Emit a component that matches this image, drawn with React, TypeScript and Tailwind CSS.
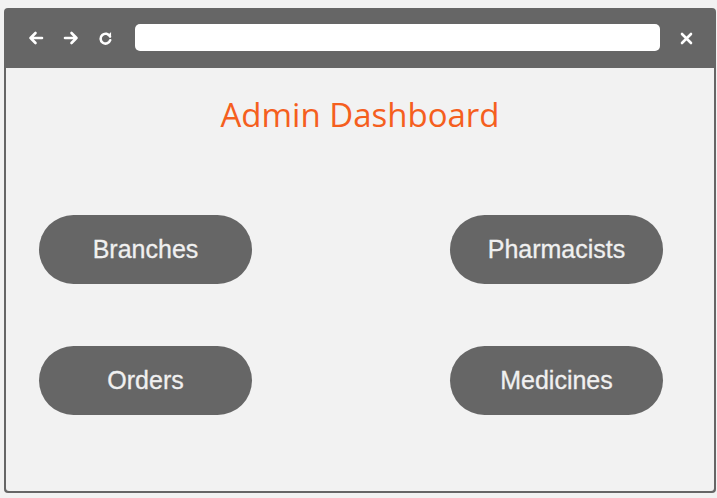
import React from 'react';

const NavButton: React.FC<{ label: string }> = ({ label }) => (
  <button className="w-[213px] h-[69px] rounded-full bg-[#666666] text-[#f0f0f0] text-[25px] font-['Liberation_Sans',Arial,sans-serif] flex items-center justify-center [-webkit-text-stroke:0.3px_#f0f0f0]">
    {label}
  </button>
);

const App: React.FC = () => {
  return (
    <div className="w-[717px] h-[498px] bg-[#f2f2f2] pt-[8px] pl-[4px] overflow-hidden">
      {/* Browser window */}
      <div className="w-[712px] h-[485px] bg-[#666666] rounded-[4px] flex flex-col px-[2px] pb-[2px]">
        {/* Toolbar */}
        <div className="h-[60px] flex items-center text-white">
          <div className="flex items-center gap-[19px] ml-[22px] w-[107px]">
            <svg width="16" height="14" viewBox="0 0 16 14" fill="none" stroke="white" strokeWidth="2.6" strokeLinecap="round" strokeLinejoin="round">
              <path d="M14 7H2.5M7.5 2L2.5 7l5 5" />
            </svg>
            <svg width="16" height="14" viewBox="0 0 16 14" fill="none" stroke="white" strokeWidth="2.6" strokeLinecap="round" strokeLinejoin="round">
              <path d="M2 7h11.5M8.5 2l5 5-5 5" />
            </svg>
            <svg width="15" height="15" viewBox="0 0 14 14" fill="none">
              <path d="M11.2 5.2A4.6 4.6 0 1 0 11.4 8.6" stroke="white" strokeWidth="2.4" strokeLinecap="round" />
              <path d="M8.6 4.6h3.6V1z" fill="white" />
            </svg>
          </div>
          <div className="w-[525px] h-[27px] bg-white rounded-[5px] mb-[2px]" />
          <div className="flex-1 flex items-center justify-center pr-[2px]">
            <svg width="13" height="13" viewBox="0 0 13 13" stroke="white" strokeWidth="2.6" strokeLinecap="round">
              <path d="M2 2l9 9M11 2l-9 9" />
            </svg>
          </div>
        </div>

        {/* Page */}
        <div className="flex-1 bg-[#f2f2f2] rounded-b-[3px] flex flex-col">
          <h1 className="mt-[25px] text-center text-[33px] leading-[44px] text-[#f55f1e] font-['Open_Sans',sans-serif]">
            Admin Dashboard
          </h1>

          <div className="mt-[78px] ml-[33px] grid grid-cols-[213px_213px] gap-x-[198px] gap-y-[62px]">
            <NavButton label="Branches" />
            <NavButton label="Pharmacists" />
            <NavButton label="Orders" />
            <NavButton label="Medicines" />
          </div>
        </div>
      </div>
    </div>
  );
};

export default App;
